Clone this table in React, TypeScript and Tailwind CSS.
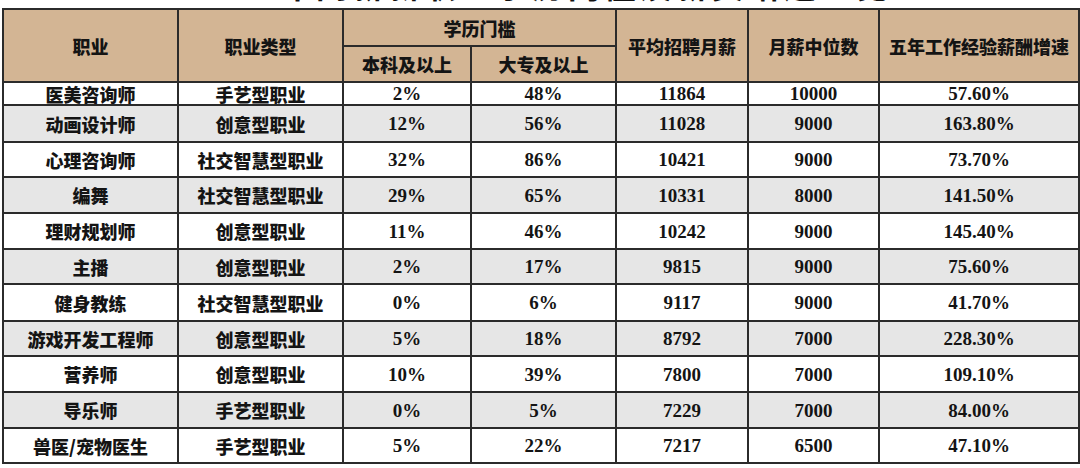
import React from 'react';

type Row = {
  name: string;
  type: string;
  bachelor: string;
  college: string;
  avg: string;
  median: string;
  growth: string;
  h: string;
};

const rows: Row[] = [
  { name: '医美咨询师', type: '手艺型职业', bachelor: '2%', college: '48%', avg: '11864', median: '10000', growth: '57.60%', h: 'h-[23px]' },
  { name: '动画设计师', type: '创意型职业', bachelor: '12%', college: '56%', avg: '11028', median: '9000', growth: '163.80%', h: 'h-[37px]' },
  { name: '心理咨询师', type: '社交智慧型职业', bachelor: '32%', college: '86%', avg: '10421', median: '9000', growth: '73.70%', h: 'h-[35px]' },
  { name: '编舞', type: '社交智慧型职业', bachelor: '29%', college: '65%', avg: '10331', median: '8000', growth: '141.50%', h: 'h-[36px]' },
  { name: '理财规划师', type: '创意型职业', bachelor: '11%', college: '46%', avg: '10242', median: '9000', growth: '145.40%', h: 'h-[36px]' },
  { name: '主播', type: '创意型职业', bachelor: '2%', college: '17%', avg: '9815', median: '9000', growth: '75.60%', h: 'h-[35px]' },
  { name: '健身教练', type: '社交智慧型职业', bachelor: '0%', college: '6%', avg: '9117', median: '9000', growth: '41.70%', h: 'h-[37px]' },
  { name: '游戏开发工程师', type: '创意型职业', bachelor: '5%', college: '18%', avg: '8792', median: '7000', growth: '228.30%', h: 'h-[35px]' },
  { name: '营养师', type: '创意型职业', bachelor: '10%', college: '39%', avg: '7800', median: '7000', growth: '109.10%', h: 'h-[36px]' },
  { name: '导乐师', type: '手艺型职业', bachelor: '0%', college: '5%', avg: '7229', median: '7000', growth: '84.00%', h: 'h-[36px]' },
  { name: '兽医/宠物医生', type: '手艺型职业', bachelor: '5%', college: '22%', avg: '7217', median: '6500', growth: '47.10%', h: 'h-[35px]' },
];

const cjk = "font-['Noto_Sans_CJK_SC',sans-serif] font-black text-[18px]";
const num = "font-['Liberation_Serif','Noto_Sans_CJK_SC',serif] font-bold text-[19px]";
const cell = 'border-2 border-[#2b2b2b] text-center align-middle p-0 leading-none text-[#141414]';
const head = `${cell} ${cjk} bg-[#d3b594]`;

export default function App() {
  return (
    <div className="w-[1080px] h-[468px] bg-white overflow-hidden">
      <div className="h-[8px] overflow-hidden flex justify-center">
        <div className="-mt-[32px] text-[32px] leading-[32px] font-bold text-[#111] font-['Noto_Sans_CJK_SC',sans-serif] tracking-[4px]">
          2021年高薪新职业学历门槛及薪资增速一览
        </div>
      </div>
      <table className="ml-[2px] table-fixed border-collapse w-[1076px]">
        <colgroup>
          <col className="w-[175px]" />
          <col className="w-[165px]" />
          <col className="w-[128px]" />
          <col className="w-[145px]" />
          <col className="w-[132px]" />
          <col className="w-[131px]" />
          <col className="w-[200px]" />
        </colgroup>
        <thead>
          <tr className="h-[37px]">
            <th rowSpan={2} className={head}>职业</th>
            <th rowSpan={2} className={head}>职业类型</th>
            <th colSpan={2} className={head}>学历门槛</th>
            <th rowSpan={2} className={head}>平均招聘月薪</th>
            <th rowSpan={2} className={head}>月薪中位数</th>
            <th rowSpan={2} className={head}>五年工作经验薪酬增速</th>
          </tr>
          <tr className="h-[36px]">
            <th className={head}>本科及以上</th>
            <th className={head}>大专及以上</th>
          </tr>
        </thead>
        <tbody>
          {rows.map((r, i) => (
            <tr key={r.name} className={`${r.h} ${i % 2 === 1 ? 'bg-[#e6e6e6]' : 'bg-white'}`}>
              <td className={`${cell} ${cjk}`}>{r.name}</td>
              <td className={`${cell} ${cjk}`}>{r.type}</td>
              <td className={`${cell} ${num}`}>{r.bachelor}</td>
              <td className={`${cell} ${num}`}>{r.college}</td>
              <td className={`${cell} ${num}`}>{r.avg}</td>
              <td className={`${cell} ${num}`}>{r.median}</td>
              <td className={`${cell} ${num}`}>{r.growth}</td>
            </tr>
          ))}
        </tbody>
      </table>
    </div>
  );
}
